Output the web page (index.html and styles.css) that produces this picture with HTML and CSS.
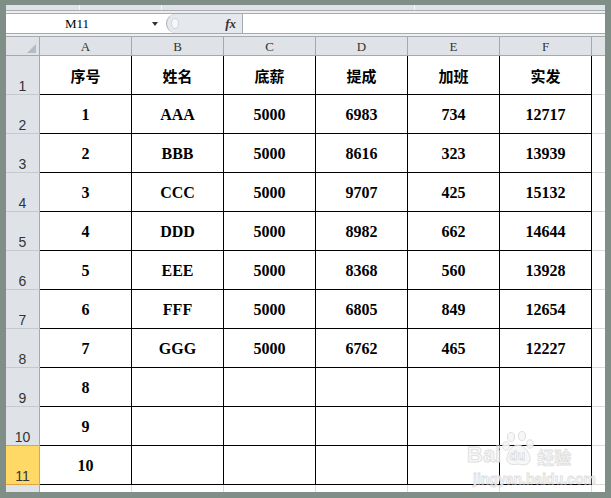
FILE: index.html
```html
<!DOCTYPE html>
<html lang="zh">
<head>
<meta charset="utf-8">
<title>Excel</title>
<link rel="stylesheet" href="styles.css">
</head>
<body>
<div class="app">
  <div class="topstrip"><span class="seg s1"></span><span class="seg s2"></span><span class="seg s3"></span><span class="seg s4"></span></div>
  <div class="gap"></div>
  <div class="fbar">
    <div class="namebox"><span class="name">M11</span><span class="arrow"></span></div>
    <div class="grip"><span class="knob"></span><span class="fx">fx</span></div>
    <div class="finput"></div>
  </div>
  <div class="gap2"></div>
  <div class="sheet">
    <div class="corner"><span class="tri"></span></div>
    <div class="ch">A</div><div class="ch">B</div><div class="ch">C</div><div class="ch">D</div><div class="ch">E</div><div class="ch">F</div><div class="ch g"></div>

    <div class="rh">1</div>
    <div class="c cjk">序号</div><div class="c cjk">姓名</div><div class="c cjk">底薪</div><div class="c cjk">提成</div><div class="c cjk">加班</div><div class="c cjk">实发</div><div class="gc"></div>

    <div class="rh">2</div>
    <div class="c">1</div><div class="c">AAA</div><div class="c">5000</div><div class="c">6983</div><div class="c">734</div><div class="c">12717</div><div class="gc"></div>

    <div class="rh">3</div>
    <div class="c">2</div><div class="c">BBB</div><div class="c">5000</div><div class="c">8616</div><div class="c">323</div><div class="c">13939</div><div class="gc"></div>

    <div class="rh">4</div>
    <div class="c">3</div><div class="c">CCC</div><div class="c">5000</div><div class="c">9707</div><div class="c">425</div><div class="c">15132</div><div class="gc"></div>

    <div class="rh">5</div>
    <div class="c">4</div><div class="c">DDD</div><div class="c">5000</div><div class="c">8982</div><div class="c">662</div><div class="c">14644</div><div class="gc"></div>

    <div class="rh">6</div>
    <div class="c">5</div><div class="c">EEE</div><div class="c">5000</div><div class="c">8368</div><div class="c">560</div><div class="c">13928</div><div class="gc"></div>

    <div class="rh">7</div>
    <div class="c">6</div><div class="c">FFF</div><div class="c">5000</div><div class="c">6805</div><div class="c">849</div><div class="c">12654</div><div class="gc"></div>

    <div class="rh">8</div>
    <div class="c">7</div><div class="c">GGG</div><div class="c">5000</div><div class="c">6762</div><div class="c">465</div><div class="c">12227</div><div class="gc"></div>

    <div class="rh">9</div>
    <div class="c">8</div><div class="c"></div><div class="c"></div><div class="c"></div><div class="c"></div><div class="c"></div><div class="gc"></div>

    <div class="rh">10</div>
    <div class="c">9</div><div class="c"></div><div class="c"></div><div class="c"></div><div class="c"></div><div class="c"></div><div class="gc"></div>

    <div class="rh sel">11</div>
    <div class="c">10</div><div class="c"></div><div class="c"></div><div class="c"></div><div class="c"></div><div class="c"></div><div class="gc"></div>

    <div class="rh last"></div>
    <div class="lc"></div><div class="lc"></div><div class="lc"></div><div class="lc"></div><div class="lc"></div><div class="lc"></div><div class="lc g"></div>
  </div>

  <div class="watermark">
    <div class="wm-top">
      <span class="wm-bai">Bai</span>
      <span class="wm-paw">
        <svg width="34" height="36" viewBox="0 0 34 36">
          <ellipse cx="9" cy="6" rx="3.5" ry="4.5" />
          <ellipse cx="20" cy="5" rx="3.5" ry="4.5" />
          <ellipse cx="4" cy="15" rx="3.3" ry="4.2" />
          <ellipse cx="28" cy="13" rx="3.3" ry="4.2" />
          <path d="M16 14 C 9 14, 4 24, 5 29 C 6 34, 12 34, 16 33 C 20 34, 27 35, 28 29 C 29 24, 23 14, 16 14 Z" />
        </svg>
        <span class="wm-du">du</span>
      </span>
      <span class="wm-jy">经验</span>
    </div>
    <div class="wm-url">jingyan.baidu.com</div>
  </div>
</div>
</body>
</html>
```

FILE: styles.css
```css
html, body {
  margin: 0;
  padding: 0;
}
body {
  background: #7f8f88;
  width: 611px;
  height: 498px;
  overflow: hidden;
}
.app {
  position: relative;
  margin: 5px 0 0 6px;
  width: 599px;
  height: 487px;
  background: #e9ebee;
  overflow: hidden;
}
.topstrip {
  display: flex;
  height: 5px;
  background: #dfe2e6;
  border-bottom: 1px solid #a9aeb4;
}
.seg {
  display: block;
  height: 5px;
  border-right: 1px solid #f6f7f8;
  box-sizing: border-box;
}
.s1 { width: 74px; }
.s2 { width: 82px; }
.s3 { width: 253px; }
.s4 { flex: 1; border-right: none; }
.gap {
  height: 2px;
  background: #eceef1;
}
.fbar {
  display: flex;
  height: 21px;
  box-sizing: border-box;
  border-top: 1px solid #a5aab0;
  border-bottom: 1px solid #a5aab0;
  background: #fff;
}
.namebox {
  width: 160px;
  display: flex;
  align-items: center;
  background: #fff;
}
.name {
  width: 142px;
  text-align: center;
  font-family: "Liberation Serif", serif;
  font-size: 13px;
  color: #000;
  padding-top: 1px;
}
.arrow {
  width: 0;
  height: 0;
  border-left: 3px solid transparent;
  border-right: 3px solid transparent;
  border-top: 4px solid #333;
  margin-left: 4px;
}
.grip {
  width: 76px;
  display: flex;
  align-items: center;
  background: #e5e8ec;
  border-left: 1px solid #a9aeb4;
  border-radius: 10px 0 0 10px;
  box-sizing: border-box;
}
.knob {
  width: 6px;
  height: 9px;
  margin-left: 4px;
  border-radius: 50%;
  background: #f6f7f9;
  border: 1px solid #d0d4d9;
}
.fx {
  margin-left: auto;
  margin-right: 6px;
  font-family: "Liberation Serif", serif;
  font-style: italic;
  font-weight: bold;
  font-size: 13px;
  color: #333;
}
.finput {
  flex: 1;
  background: #fff;
  border-left: 1px solid #a5aab0;
}
.gap2 {
  height: 2px;
  background: #eceef1;
  border-bottom: 1px solid #a5aab0;
}
.sheet {
  display: grid;
  grid-template-columns: 34px repeat(6, 92px) 13px;
  grid-template-rows: 19px repeat(11, 39px) 7px;
  background: #fff;
}
.sheet > div {
  box-sizing: border-box;
}
.corner {
  background: #dfe3e8;
  border-right: 1px solid #a4a9af;
  border-bottom: 1px solid #a4a9af;
  display: flex;
  align-items: flex-end;
  justify-content: flex-end;
  padding: 0 3px 2px 0;
}
.tri {
  width: 0;
  height: 0;
  border-left: 9px solid transparent;
  border-bottom: 9px solid #b6bbc1;
}
.ch {
  background: #dfe3e8;
  border-right: 1px solid #a4a9af;
  border-bottom: 1px solid #a4a9af;
  display: flex;
  align-items: center;
  justify-content: center;
  font-family: "Liberation Serif", serif;
  font-size: 13px;
  color: #333;
  padding-top: 1px;
}
.ch.g {
  border-right: none;
}
.rh {
  background: #dfe3e8;
  border-right: 1px solid #a4a9af;
  border-bottom: 1px solid #c5c9ce;
  display: flex;
  align-items: flex-end;
  justify-content: center;
  font-family: "Liberation Sans", Arial, sans-serif;
  font-size: 14px;
  line-height: 14px;
  color: #333;
  padding-bottom: 1px;
}
.rh.sel {
  background: #ffd965;
  border-right: 1px solid #e0a542;
  border-bottom: 1px solid #e0a542;
  border-top: 1px solid #e0a542;
  margin-top: -1px;
  height: 40px;
}
.rh.last {
  border-bottom: none;
}
.c {
  border-right: 1px solid #000;
  border-bottom: 1px solid #000;
  display: flex;
  align-items: center;
  justify-content: center;
  font-family: "Liberation Serif", "Noto Sans CJK SC", serif;
  font-weight: bold;
  font-size: 16px;
  color: #000;
  padding-top: 2px;
}
.c.cjk {
  font-family: "Noto Sans CJK SC", sans-serif;
  font-size: 15px;
  padding-top: 0;
}
.gc {
  border-bottom: 1px solid #d9dbde;
}
.lc {
  border-right: 1px solid #d9dbde;
}
.lc.g {
  border-right: none;
}
.watermark {
  position: absolute;
  left: 461px;
  top: 426px;
  width: 116px;
  opacity: 0.9;
}
.wm-top {
  display: flex;
  align-items: flex-end;
  height: 36px;
}
.wm-bai {
  font-family: "Liberation Sans", Arial, sans-serif;
  font-weight: bold;
  font-size: 22px;
  line-height: 20px;
  color: #f7f7f7;
  -webkit-text-stroke: 1px #dedede;
  margin-bottom: 2px;
}
.wm-paw {
  position: relative;
  width: 34px;
  height: 36px;
  margin-left: 1px;
}
.wm-paw svg {
  display: block;
}
.wm-paw ellipse, .wm-paw path {
  fill: #f7f7f7;
  stroke: #dcdcdc;
  stroke-width: 1;
}
.wm-du {
  position: absolute;
  left: 7px;
  top: 17px;
  font-family: "Liberation Sans", Arial, sans-serif;
  font-weight: bold;
  font-size: 13px;
  color: #fff;
  -webkit-text-stroke: 0.8px #d8d8d8;
}
.wm-jy {
  font-family: "Noto Sans CJK SC", sans-serif;
  font-weight: bold;
  font-size: 17px;
  line-height: 18px;
  color: #f7f7f7;
  -webkit-text-stroke: 0.8px #dcdcdc;
  margin-left: 1px;
  margin-bottom: 1px;
}
.wm-url {
  font-family: "Liberation Sans", Arial, sans-serif;
  font-weight: bold;
  font-size: 14px;
  line-height: 16px;
  color: #f7f7f7;
  -webkit-text-stroke: 0.8px #dcdcdc;
  margin-top: 4px;
  margin-left: 6px;
}
```
